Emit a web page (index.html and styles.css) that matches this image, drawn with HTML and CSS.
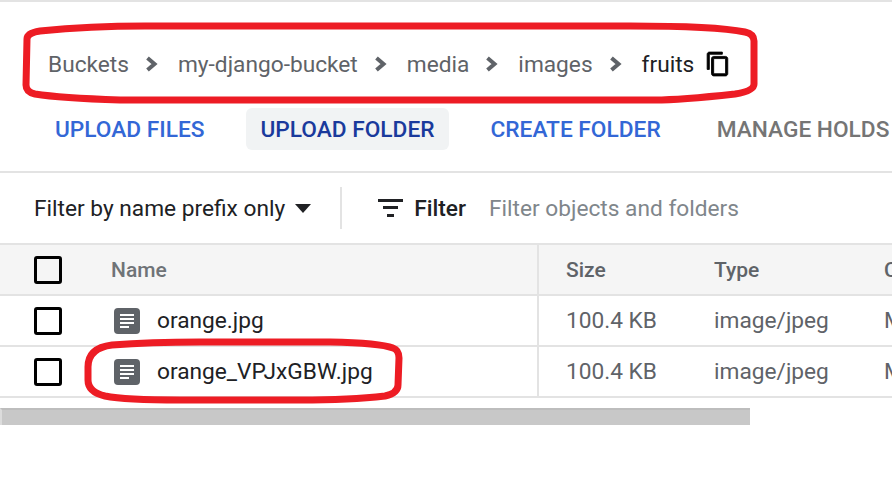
FILE: index.html
```html
<!DOCTYPE html>
<html lang="en">
<head>
    <meta charset="UTF-8">
    <title>my-django-bucket - fruits</title>
    <link rel="stylesheet" href="styles.css">
</head>
<body>
    <div class="page">
        <!-- Breadcrumb -->
        <nav class="crumbs">
            <span class="crumb">Buckets</span>
            <svg class="chevron" viewBox="0 0 12 16"><path d="M1.5 2 8.5 8 1.5 14"/></svg>
            <span class="crumb">my-django-bucket</span>
            <svg class="chevron" viewBox="0 0 12 16"><path d="M1.5 2 8.5 8 1.5 14"/></svg>
            <span class="crumb">media</span>
            <svg class="chevron" viewBox="0 0 12 16"><path d="M1.5 2 8.5 8 1.5 14"/></svg>
            <span class="crumb">images</span>
            <svg class="chevron" viewBox="0 0 12 16"><path d="M1.5 2 8.5 8 1.5 14"/></svg>
            <span class="crumb current">fruits</span>
            <svg class="copy" viewBox="0 0 24 24"><path d="M16 1H4c-1.1 0-2 .9-2 2v14h2V3h12V1zm3 4H8c-1.1 0-2 .9-2 2v14c0 1.1.9 2 2 2h11c1.1 0 2-.9 2-2V7c0-1.1-.9-2-2-2zm0 16H8V7h11v14z"/></svg>
        </nav>

        <!-- Actions -->
        <div class="actions">
            <button class="action">UPLOAD FILES</button>
            <button class="action hover">UPLOAD FOLDER</button>
            <button class="action">CREATE FOLDER</button>
            <button class="action disabled">MANAGE HOLDS</button>
        </div>

        <!-- Filter -->
        <div class="filter-bar">
            <span class="prefix">Filter by name prefix only</span>
            <span class="caret"></span>
            <span class="divider"></span>
            <svg class="filter-icon" viewBox="0 0 25 18"><path d="M0 0h25v3H0zM5 7h15v3H5zM9 15h7v3H9z"/></svg>
            <span class="filter-label">Filter</span>
            <span class="filter-hint">Filter objects and folders</span>
        </div>

        <!-- Objects -->
        <div class="table">
            <div class="row head">
                <div class="cell check"><span class="checkbox"></span></div>
                <div class="cell name">Name</div>
                <div class="cell size">Size</div>
                <div class="cell type">Type</div>
                <div class="cell extra">Created</div>
            </div>
            <div class="row">
                <div class="cell check"><span class="checkbox"></span></div>
                <div class="cell name">
                    <svg class="file-icon" viewBox="0 0 26 26"><rect width="26" height="26" rx="4"/><path d="M6 6h14v2H6zM6 10h14v2H6zM6 14h14v2H6zM6 18h9v2H6z"/></svg>
                    orange.jpg
                </div>
                <div class="cell size">100.4 KB</div>
                <div class="cell type">image/jpeg</div>
                <div class="cell extra">Mar</div>
            </div>
            <div class="row">
                <div class="cell check"><span class="checkbox"></span></div>
                <div class="cell name">
                    <svg class="file-icon" viewBox="0 0 26 26"><rect width="26" height="26" rx="4"/><path d="M6 6h14v2H6zM6 10h14v2H6zM6 14h14v2H6zM6 18h9v2H6z"/></svg>
                    orange_VPJxGBW.jpg
                </div>
                <div class="cell size">100.4 KB</div>
                <div class="cell type">image/jpeg</div>
                <div class="cell extra">Mar</div>
            </div>
        </div>

        <div class="scrollbar"><div class="thumb"></div></div>

        <!-- Red marks drawn over the screenshot -->
        <svg class="marks" viewBox="0 0 892 495">
            <path d="M27 39Q27 33 40 31Q90 26 145 26L630 26Q715 26 745 32Q754 34 754 41L754 84Q754 91 735 94Q680 100 655 100L120 100Q60 98 35 94Q26 92 26 85Z"/>
            <path d="M88 367Q88 348 112 345Q150 342 200 342L330 342Q380 343 393 348Q399 350 399 358L398 385Q398 393 385 396Q350 400 300 400L180 400Q125 400 105 396Q88 392 88 380Z"/>
        </svg>
    </div>
</body>
</html>
```

FILE: styles.css
```css
body {
    margin: 0;
    font-family: Roboto, "Liberation Sans", sans-serif;
    background-color: #fff;
    color: #202124;
}

.page {
    position: relative;
    width: 892px;
    height: 495px;
    overflow: hidden;
    border-top: 2px solid #e3e3e3;
    box-sizing: border-box;
}

.crumbs {
    display: flex;
    align-items: center;
    height: 103px;
    padding: 21px 0 0 48px;
    box-sizing: border-box;
    font-size: 22.7px;
    white-space: nowrap;
}

.crumb {
    color: #5f6368;
}

.crumb.current {
    color: #202124;
}

.chevron {
    width: 12px;
    height: 16px;
    margin: 0 20px 0 17px;
    fill: none;
    stroke: #5f6368;
    stroke-width: 4;
}

.copy {
    width: 26px;
    height: 26px;
    margin-left: 11px;
    fill: #000;
    stroke: #000;
    stroke-width: 0.8;
}

.actions {
    display: flex;
    align-items: center;
    height: 44px;
    margin-top: 2px;
    padding-left: 41px;
}

.action {
    flex-shrink: 0;
    height: 42px;
    padding: 0 14px;
    margin-right: 28px;
    border: none;
    border-radius: 6px;
    background: none;
    font-family: inherit;
    font-size: 22.7px;
    font-weight: 500;
    color: #3367d6;
}

.action.hover {
    background-color: #f1f3f4;
    color: #1a3a9c;
}

.action.disabled {
    color: #757575;
}

.filter-bar {
    display: flex;
    align-items: center;
    height: 72px;
    margin-top: 20px;
    padding-left: 34px;
    border-top: 2px solid #e3e3e3;
    box-sizing: border-box;
    font-size: 22.7px;
    white-space: nowrap;
}

.caret {
    width: 0;
    height: 0;
    margin-left: 10px;
    border-left: 8px solid transparent;
    border-right: 8px solid transparent;
    border-top: 9px solid #202124;
}

.divider {
    width: 2px;
    height: 42px;
    margin: 0 36px 0 29px;
    background-color: #e3e3e3;
}

.filter-icon {
    width: 25px;
    height: 18px;
    fill: #202124;
}

.filter-label {
    margin-left: 11px;
    font-weight: 500;
}

.filter-hint {
    margin-left: 23px;
    color: #80868b;
}

.table {
    border-top: 2px solid #e3e3e3;
}

.row {
    display: grid;
    grid-template-columns: 111px 426px 177px 170px 100px;
    height: 51px;
    border-bottom: 2px solid #e3e3e3;
    box-sizing: border-box;
    font-size: 22.7px;
    white-space: nowrap;
}

.row.head {
    background-color: #f5f5f5;
    font-size: 21px;
    font-weight: 500;
    color: #6f7377;
}

.cell {
    display: flex;
    align-items: center;
}

.check {
    padding-left: 34px;
}

.checkbox {
    width: 28px;
    height: 28px;
    border: 3px solid #000;
    border-radius: 3px;
    box-sizing: border-box;
}

.file-icon {
    width: 26px;
    height: 26px;
    margin: 0 17px 0 3px;
    flex-shrink: 0;
}

.file-icon rect {
    fill: #5f6368;
}

.file-icon path {
    fill: #fff;
}

.size {
    padding-left: 27px;
    border-left: 2px solid #e3e3e3;
}

.size, .type, .extra {
    color: #5f6368;
}

.scrollbar {
    height: 17px;
    margin-top: 10px;
}

.thumb {
    width: 750px;
    height: 17px;
    background-color: #c8c8c8;
    border-top: 2px solid #bdbdbd;
    border-left: 2px solid #dcdcdc;
    box-sizing: border-box;
}

.marks {
    position: absolute;
    top: -2px;
    left: 0;
    width: 892px;
    height: 495px;
    fill: none;
    stroke: #ed1c24;
    stroke-width: 7;
    pointer-events: none;
}
```
